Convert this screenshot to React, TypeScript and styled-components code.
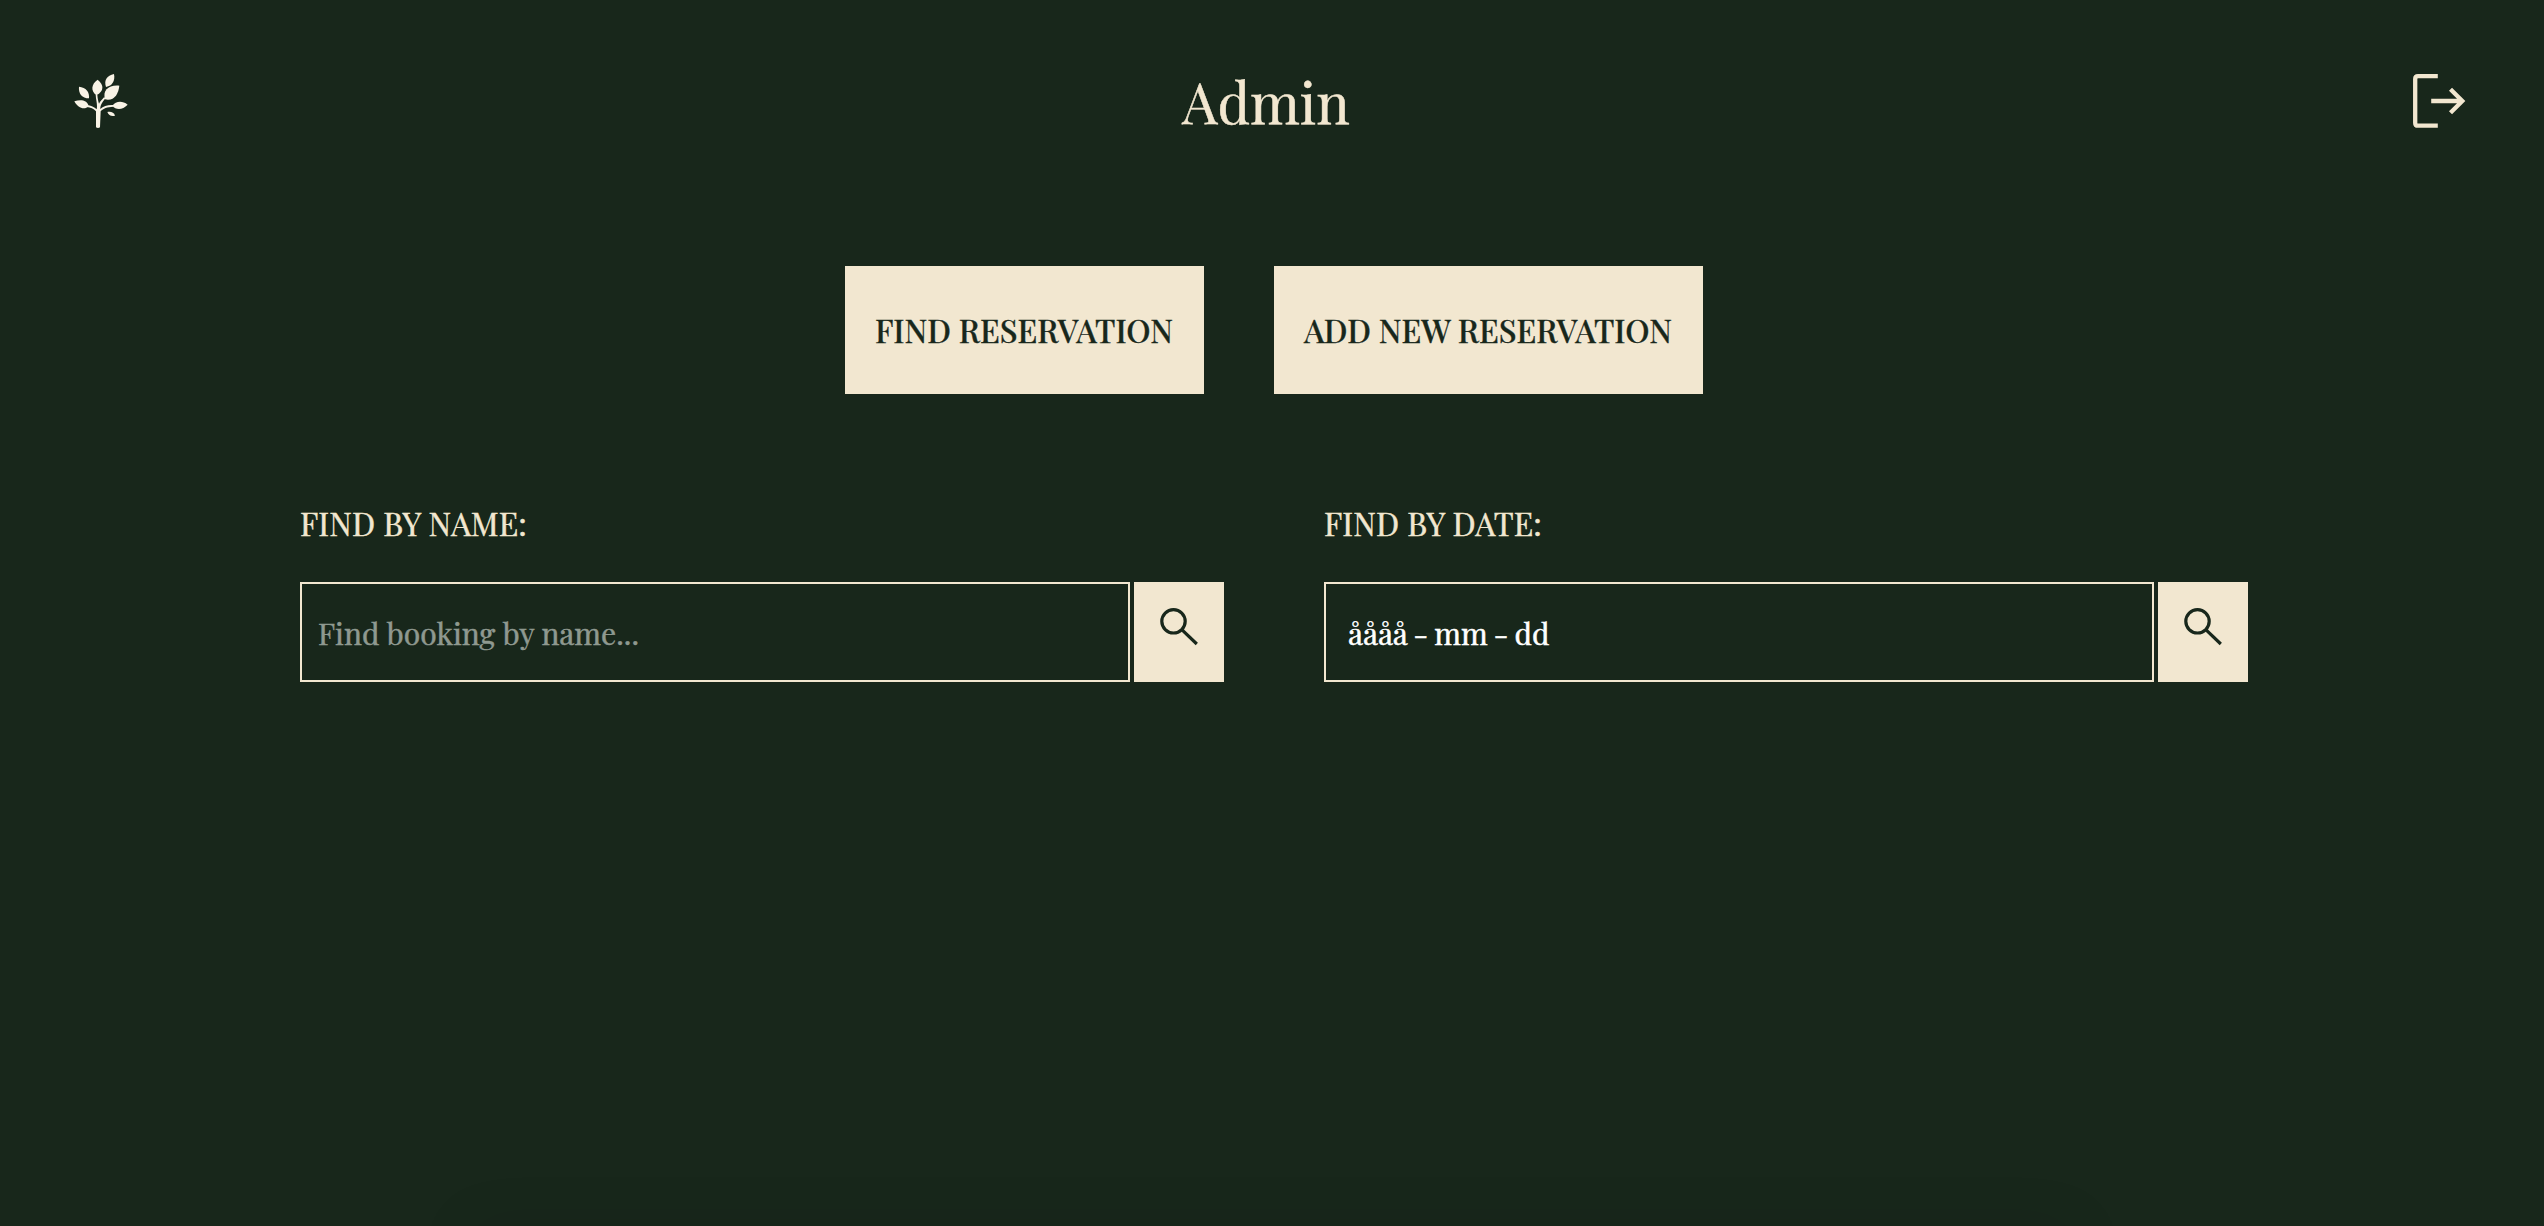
import React from "react";
import styled, { createGlobalStyle } from "styled-components";

const green = "#18271b";
const cream = "#f2e7d0";

const GlobalStyle = createGlobalStyle`
  *, *::before, *::after { box-sizing: border-box; }
  body {
    margin: 0;
    background: ${green};
    color: ${cream};
    font-family: "Playfair Display", "Liberation Serif", serif;
    -webkit-text-stroke: 0.5px currentColor;
  }
  button, input { font: inherit; color: inherit; border-radius: 0; }
`;

const Page = styled.div`
  display: flex;
  flex-direction: column;
  height: 1226px;
  overflow: hidden;
`;

const Header = styled.header`
  display: grid;
  grid-template-columns: 1fr auto 1fr;
  align-items: center;
  flex: none;
  height: 202px;
  padding: 0 77px 0 65px;
`;

const LogoLink = styled.a`
  display: flex;
  padding-left: 9px;
`;

const LogoutButton = styled.button`
  display: flex;
  justify-self: end;
  padding: 0;
  border: 0;
  background: none;
`;

const Title = styled.h1`
  margin: 0;
  font-size: 56px;
  font-weight: 400;
  line-height: 76px;
`;

const Main = styled.main`
  display: flex;
  flex-direction: column;
  align-items: center;
  padding: 64px 0 0 4px;
`;

const Actions = styled.nav`
  display: flex;
  gap: 70px;
`;

const ActionButton = styled.button<{ $width: number }>`
  width: ${({ $width }) => $width}px;
  height: 128px;
  padding: 0 1px 2px 0;
  border: 0;
  background: ${cream};
  color: ${green};
  font-size: 32px;
  font-weight: 500;
  text-transform: uppercase;
  white-space: nowrap;
  -webkit-text-stroke: 0.35px currentColor;
`;

const Searches = styled.section`
  display: grid;
  grid-template-columns: 924px 924px;
  gap: 100px;
  margin-top: 108px;
`;

const SearchForm = styled.form`
  display: flex;
  flex-direction: column;
  gap: 38px;
`;

const Label = styled.label`
  font-size: 32px;
  line-height: 42px;
  letter-spacing: 0.08px;
  text-transform: uppercase;
`;

const Row = styled.div`
  display: flex;
  gap: 4px;
  height: 100px;
`;

const NameInput = styled.input`
  width: 830px;
  padding: 2px 16px 0;
  border: 2px solid ${cream};
  background: transparent;
  font-size: 30px;
  letter-spacing: 0.04px;
  outline: none;
  -webkit-text-stroke: 0.5px #8f9990;
  &::placeholder { color: #8f9990; opacity: 1; }
`;

const DateInput = styled.div`
  display: flex;
  align-items: center;
  width: 830px;
  padding: 2px 22px 0;
  border: 2px solid ${cream};
  color: #fff;
  font-size: 30px;
  word-spacing: -1.5px;
  -webkit-text-stroke: 0.5px #fff;
`;

const SearchButton = styled.button`
  display: flex;
  justify-content: center;
  width: 90px;
  height: 100px;
  padding: 22px 0 0;
  border: 0;
  background: ${cream};
  color: ${green};
`;

/* Sits just under the fold, so only its soft shadow reaches the page. */
const FoldShadow = styled.div`
  flex: none;
  width: 1600px;
  height: 40px;
  margin: auto auto -44px;
  box-shadow: 0 0 60px rgba(0, 0, 0, 0.12);
`;

const SearchIcon = () => (
  <svg width="46" height="46" viewBox="0 0 46 46" fill="none" stroke="currentColor" strokeWidth="3.2">
    <circle cx="17.5" cy="17.3" r="11.7" />
    <path d="M25.8 25.6 40.8 40" />
  </svg>
);

const TreeLogo = () => (
  <svg width="54" height="54" viewBox="42 42 162 162" fill="#f9f3e6">
    <path d="M113 59C94 72 91 92 109 106C133 93 132 74 113 59Z" />
    <path d="M162 42C141 46 131 61 138 81C157 77 166 63 162 42Z" />
    <path d="M178 77C146 74 127 91 135 118C162 124 175 103 178 77Z" />
    <path d="M57 80C55 101 66 115 87 115C89 96 78 82 57 80Z" />
    <path d="M43 124C55 147 76 151 86 137C80 120 63 117 43 124Z" />
    <path d="M203 134C186 121 167 124 157 137C168 151 188 150 203 134Z" />
    <path d="M142 156C146 167 154 169 165 167C162 157 153 154 142 156Z" />
    <path d="M108 202V154C101 145 92 142 80 141V136C93 136 103 141 110 148C113 134 108 121 107 104H112C113 117 115 124 117 131C120 125 126 119 132 112L137 114C125 129 121 136 121 147C130 138 144 134 160 135V140C141 141 130 145 122 154L120 202Q114 206 108 202Z" />
  </svg>
);

const LogoutIcon = () => (
  <svg width="54" height="54" viewBox="0 0 54 54" fill="none" stroke={cream} strokeWidth="4.3">
    <path d="M25.8 2.2H6Q3.2 2.2 3.2 5V48.9Q3.2 51.7 6 51.7H25.8" transform="translate(-1 0)" />
    <path d="M18.2 27H49.5M37.5 15.2 49.3 27 37.5 38.8" />
  </svg>
);

export default function App() {
  return (
    <>
      <GlobalStyle />
      <Page>
        <Header>
          <LogoLink aria-label="Home"><TreeLogo /></LogoLink>
          <Title>Admin</Title>
          <LogoutButton aria-label="Log out"><LogoutIcon /></LogoutButton>
        </Header>
        <Main>
          <Actions>
            <ActionButton $width={359}>Find reservation</ActionButton>
            <ActionButton $width={429}>Add new reservation</ActionButton>
          </Actions>
          <Searches>
            <SearchForm>
              <Label htmlFor="name">Find by name:</Label>
              <Row>
                <NameInput id="name" placeholder="Find booking by name..." />
                <SearchButton type="button" aria-label="Search"><SearchIcon /></SearchButton>
              </Row>
            </SearchForm>
            <SearchForm>
              <Label>Find by date:</Label>
              <Row>
                <DateInput>åååå - mm - dd</DateInput>
                <SearchButton type="button" aria-label="Search"><SearchIcon /></SearchButton>
              </Row>
            </SearchForm>
          </Searches>
        </Main>
        <FoldShadow />
      </Page>
    </>
  );
}
